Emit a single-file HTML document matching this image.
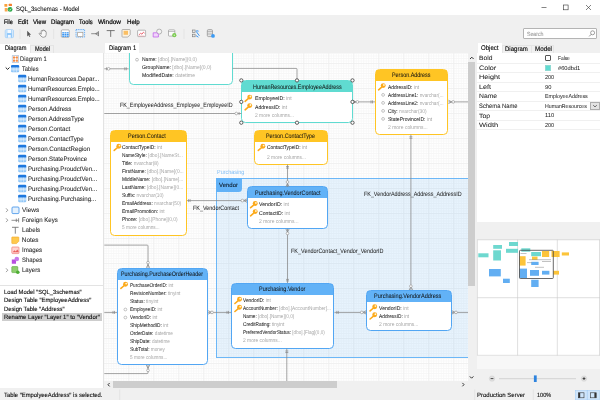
<!DOCTYPE html><html><head><meta charset="utf-8"><title>SQL_3schemas - Model</title><style>html,body{margin:0;padding:0}body{width:600px;height:400px;position:relative;overflow:hidden;background:#f0f0f0;font-family:'Liberation Sans',sans-serif;text-rendering:geometricPrecision;}#w{position:absolute;left:0;top:0;width:600px;height:400px;will-change:transform}
.b{position:absolute;box-sizing:border-box}.t{position:absolute;white-space:pre;transform-origin:0 50%;-webkit-text-stroke:0.12px}svg{position:absolute;left:0;top:0;overflow:visible}</style></head><body><div id="w"><div class="b" style="left:0px;top:0px;width:600px;height:15px;background:#fff;"></div><svg width="600" height="400"><rect x="4.4" y="4" width="2.9" height="2.8" rx="0.5" fill="#f9a03a"/><rect x="8.7" y="3.7" width="3.3" height="2.3" rx="0.5" fill="#f57f2e"/><rect x="4.7" y="8" width="2.9" height="3.5" rx="0.5" fill="#f9a84e"/><circle cx="10.1" cy="9.4" r="2.4" fill="#2eaa4a"/><path d="M9 9.500l0.800 0.800 1.500-1.700" stroke="#fff" stroke-width="0.6" fill="none"/></svg><span class="t" id="t0" style="left:15.70px;top:5.00px;font-size:6.50px;color:#000;line-height:10px;transform:scaleX(0.908);-webkit-text-stroke:0.05px;">SQL_3schemas - Model</span><svg width="600" height="400"><path d="M541.5 7.5h5" stroke="#333" stroke-width="0.6"/><rect x="563.3" y="5" width="4.8" height="4.8" fill="none" stroke="#333" stroke-width="0.6"/><path d="M586 5l5 5M591 5l-5 5" stroke="#333" stroke-width="0.6"/></svg><span class="t" id="t1" style="left:3.60px;top:18.00px;font-size:6.50px;color:#000;line-height:10px;transform:scaleX(0.839);-webkit-text-stroke:0.2px;">File</span><span class="t" id="t2" style="left:18.00px;top:18.00px;font-size:6.50px;color:#000;line-height:10px;transform:scaleX(0.893);-webkit-text-stroke:0.2px;">Edit</span><span class="t" id="t3" style="left:33.00px;top:18.00px;font-size:6.50px;color:#000;line-height:10px;transform:scaleX(0.930);-webkit-text-stroke:0.2px;">View</span><span class="t" id="t4" style="left:51.00px;top:18.00px;font-size:6.50px;color:#000;line-height:10px;transform:scaleX(0.936);-webkit-text-stroke:0.2px;">Diagram</span><span class="t" id="t5" style="left:79.40px;top:18.00px;font-size:6.50px;color:#000;line-height:10px;transform:scaleX(0.895);-webkit-text-stroke:0.2px;">Tools</span><span class="t" id="t6" style="left:98.00px;top:18.00px;font-size:6.50px;color:#000;line-height:10px;transform:scaleX(0.995);-webkit-text-stroke:0.2px;">Window</span><span class="t" id="t7" style="left:127.40px;top:18.00px;font-size:6.50px;color:#000;line-height:10px;transform:scaleX(0.942);-webkit-text-stroke:0.2px;">Help</span><div class="b" style="left:522.6px;top:27.7px;width:74.4px;height:11.4px;background:#fff;border:0.7px solid #b4b4b4;border-radius:1px;"></div><span class="t" id="t8" style="left:526.50px;top:30.00px;font-size:6.00px;color:#a0a0a0;line-height:10px;transform:scaleX(0.868);">Search</span><svg width="600" height="400"><circle cx="592.6" cy="32.8" r="2" fill="none" stroke="#666" stroke-width="0.6"/><path d="M591.2 34.3l-2 2.1" stroke="#666" stroke-width="0.7"/></svg><svg width="600" height="400"><rect x="5.200" y="29.700" width="8.300" height="8" rx="1.200" fill="#8cc6fa" stroke="#9dcbf6" stroke-width="0.6"/><rect x="7.300" y="30" width="4" height="3.100" fill="#f4f9ff"/><rect x="7.800" y="34.900" width="3" height="2.800" fill="#eef6ff"/><rect x="5.500" y="30" width="1.300" height="7.400" fill="#d3e9fd"/><rect x="11.900" y="30" width="1.300" height="7.400" fill="#d3e9fd"/><path d="M20 29v10M53.6 29v10M184 29v10" stroke="#dedede" stroke-width="0.6"/><path d="M27.200 30.800v5.600l1.300-1.200 1 1.900 0.800-0.400-1-1.900h1.800z" fill="#555"/><path d="M41.200 34.300V31.300Q41.200 30.500 41.900 30.500Q42.600 30.500 42.600 31.200V30.600Q42.600 29.900 43.300 29.900Q44 29.900 44 30.600V31Q44 30.400 44.650 30.400Q45.300 30.400 45.300 31.100V31.800Q45.400 31.400 45.850 31.450Q46.200 31.500 46.200 32.200V34.600Q46.200 37.300 43.500 37.300Q42 37.300 41 36.100L39.400 34.100Q38.900 33.400 39.500 33.050Q40.100 32.800 40.600 33.400Z" fill="#f8f8f8" stroke="#6f6f6f" stroke-width="0.65" stroke-linejoin="round"/><rect x="61.300" y="29.900" width="8" height="7.400" rx="1" fill="#fff" stroke="#8a8a8a" stroke-width="0.6"/><rect x="62.2" y="32.2" width="1.900" height="1.300" fill="#3b96f2"/><rect x="62.2" y="34" width="1.900" height="1.300" fill="#3b96f2"/><rect x="62.2" y="35.6" width="1.900" height="1.300" fill="#3b96f2"/><rect x="64.5" y="32.2" width="1.900" height="1.300" fill="#3b96f2"/><rect x="64.5" y="34" width="1.900" height="1.300" fill="#3b96f2"/><rect x="64.5" y="35.6" width="1.900" height="1.300" fill="#3b96f2"/><rect x="66.8" y="32.2" width="1.900" height="1.300" fill="#3b96f2"/><rect x="66.8" y="34" width="1.900" height="1.300" fill="#3b96f2"/><rect x="66.8" y="35.6" width="1.900" height="1.300" fill="#3b96f2"/><rect x="76" y="29.500" width="8.600" height="7.600" fill="#dcecfb" stroke="#4ea0f3" stroke-width="0.8" stroke-dasharray="1.300 0.900"/><rect x="77.700" y="32.400" width="5.200" height="4" fill="#fff" stroke="#a09080" stroke-width="0.6"/><path d="M91.200 33.700h7.300M98.500 31.400v4.700M95.600 33.700l2.900-2M95.600 33.700l2.900 2" stroke="#666" stroke-width="0.7" fill="none"/><path d="M106.700 30.600h8M110.700 30.600v6.300" stroke="#555" stroke-width="0.8" fill="none"/><path d="M122.600 29.500h7q.6 0 .6.600v4.600l-2.400 2.400h-5.200q-.6 0-.6-.600v-6.400q0-.6.600-.6z" fill="#fdf3e2" stroke="#8a8a8a" stroke-width="0.6"/><rect x="123.600" y="30.800" width="4.400" height="4" fill="#fbbf63"/><rect x="137.600" y="30.200" width="8" height="6.400" rx="0.800" fill="#fff" stroke="#8a8a8a" stroke-width="0.6"/><path d="M138.800 35l1.800-1.700 1.400 0.900 1.400-2 1.200 1" stroke="#ea5a67" stroke-width="0.9" fill="none"/><path d="M138.600 36h6" stroke="#f2a0a8" stroke-width="0.6"/><circle cx="159.200" cy="31.600" r="2.500" fill="#f4f4f4" stroke="#8a8a8a" stroke-width="0.6"/><path d="M153.200 32.800h3.600l1.600 1.400v2.800h-5.200z" fill="#f1d5fc" stroke="#c264ea" stroke-width="0.8"/><rect x="168.500" y="29.900" width="6.300" height="6.200" rx="0.600" fill="#fbfbfb" stroke="#8a8a8a" stroke-width="0.6"/><path d="M168.500 31.500h6.300" stroke="#8a8a8a" stroke-width="0.5"/><circle cx="174.300" cy="35.200" r="2.100" fill="#7ccb52"/><circle cx="174.300" cy="35.200" r="0.700" fill="#d9f2c8"/><rect x="192.300" y="30" width="2.800" height="2.600" fill="#e8e8e8" stroke="#777" stroke-width="0.6"/><rect x="192.300" y="34.200" width="2.800" height="2.600" fill="#e8e8e8" stroke="#777" stroke-width="0.6"/><path d="M196 31.200l3.400 4.600M196.400 30.600l2.200 0.600M196 35.600l2.400 1.600" stroke="#3b96f2" stroke-width="1" fill="none"/><rect x="207.300" y="29.600" width="5.200" height="7" rx="1.200" fill="#e4e4e4" stroke="#7d7d7d" stroke-width="0.6"/><path d="M207.300 31.600h5.200M207.300 34h5.200" stroke="#8a8a8a" stroke-width="0.5"/><circle cx="213" cy="35.900" r="1.900" fill="#3b9bf5"/></svg><div class="b" style="left:0px;top:53.4px;width:103px;height:335.1px;background:#fff;"></div><div class="b" style="left:103px;top:53.4px;width:1.3px;height:335.1px;background:#e3e3e3;"></div><div class="b" style="left:0px;top:43.6px;width:30.3px;height:10px;background:#fff;"></div><div class="b" style="left:30.3px;top:45px;width:23.8px;height:8.4px;background:#f0f0f0;border:0.6px solid #e4e4e4;border-bottom:none;"></div><span class="t" id="t9" style="left:4.80px;top:44.00px;font-size:6.70px;color:#000;line-height:10px;transform:scaleX(0.846);">Diagram</span><span class="t" id="t10" style="left:34.50px;top:45.00px;font-size:6.70px;color:#000;line-height:10px;transform:scaleX(0.829);">Model</span><span class="t" id="t11" style="left:27.80px;top:75.00px;font-size:6.40px;color:#262626;line-height:10px;transform:scaleX(0.945);-webkit-text-stroke:0.06px;">HumanResources.Depar...</span><span class="t" id="t12" style="left:27.80px;top:85.00px;font-size:6.40px;color:#262626;line-height:10px;transform:scaleX(0.939);-webkit-text-stroke:0.06px;">HumanResources.Emplo...</span><span class="t" id="t13" style="left:27.80px;top:95.00px;font-size:6.40px;color:#262626;line-height:10px;transform:scaleX(0.939);-webkit-text-stroke:0.06px;">HumanResources.Emplo...</span><span class="t" id="t14" style="left:27.80px;top:105.00px;font-size:6.40px;color:#262626;line-height:10px;transform:scaleX(0.950);-webkit-text-stroke:0.06px;">Person.Address</span><span class="t" id="t15" style="left:27.80px;top:115.00px;font-size:6.40px;color:#262626;line-height:10px;transform:scaleX(0.947);-webkit-text-stroke:0.06px;">Person.AddressType</span><span class="t" id="t16" style="left:27.80px;top:125.00px;font-size:6.40px;color:#262626;line-height:10px;transform:scaleX(0.958);-webkit-text-stroke:0.06px;">Person.Contact</span><span class="t" id="t17" style="left:27.80px;top:135.00px;font-size:6.40px;color:#262626;line-height:10px;transform:scaleX(0.962);-webkit-text-stroke:0.06px;">Person.ContactType</span><span class="t" id="t18" style="left:27.80px;top:145.00px;font-size:6.40px;color:#262626;line-height:10px;transform:scaleX(0.967);-webkit-text-stroke:0.06px;">Person.ContactRegion</span><span class="t" id="t19" style="left:27.80px;top:155.00px;font-size:6.40px;color:#262626;line-height:10px;transform:scaleX(0.958);-webkit-text-stroke:0.06px;">Person.StateProvince</span><span class="t" id="t20" style="left:27.80px;top:165.00px;font-size:6.40px;color:#262626;line-height:10px;transform:scaleX(0.959);-webkit-text-stroke:0.06px;">Purchasing.ProudctVen...</span><span class="t" id="t21" style="left:27.80px;top:175.00px;font-size:6.40px;color:#262626;line-height:10px;transform:scaleX(0.959);-webkit-text-stroke:0.06px;">Purchasing.ProudctVen...</span><span class="t" id="t22" style="left:27.80px;top:185.00px;font-size:6.40px;color:#262626;line-height:10px;transform:scaleX(0.959);-webkit-text-stroke:0.06px;">Purchasing.ProudctVen...</span><span class="t" id="t23" style="left:27.80px;top:195.00px;font-size:6.40px;color:#262626;line-height:10px;transform:scaleX(0.960);-webkit-text-stroke:0.06px;">Purchasing.Purchasing...</span><span class="t" id="t24" style="left:20.40px;top:55.00px;font-size:6.40px;color:#262626;line-height:10px;transform:scaleX(0.902);-webkit-text-stroke:0.06px;">Diagram 1</span><span class="t" id="t25" style="left:21.50px;top:65.00px;font-size:6.40px;color:#262626;line-height:10px;transform:scaleX(0.893);-webkit-text-stroke:0.06px;">Tables</span><svg width="600" height="400"><defs><linearGradient id="tg" x1="0" y1="0" x2="0" y2="1"><stop offset="0" stop-color="#d9ecfd"/><stop offset="1" stop-color="#86c1f6"/></linearGradient></defs><rect x="12.200" y="55.700" width="6.500" height="6.700" fill="#fff" stroke="#9db3cc" stroke-width="0.6"/><rect x="13" y="56.500" width="2" height="2" fill="#f58a42"/><rect x="15.900" y="56.500" width="2" height="2" fill="#f58a42"/><rect x="13" y="59.700" width="2" height="2" fill="#f58a42"/><rect x="15.900" y="59.700" width="2" height="2" fill="#f58a42"/><path d="M14 58.500v1.200M16.900 58.500v1.200M15 57.500h0.900M15 60.700h0.900" stroke="#f58a42" stroke-width="0.5"/><path d="M5.700 67.500l1.900 1.900 1.900-1.900" stroke="#222" stroke-width="1" fill="none"/><rect x="11" y="65.90" width="8.200" height="6.400" rx="1.100" fill="url(#tg)"/><path d="M11 67.50v-1.400q0-1.200 1.200-1.200h5.800q1.200 0 1.200 1.200v1.400z" fill="#1f78de"/><path d="M11.30 69.80h7.600M13.90 67.70v4.400M16.50 67.70v4.400" stroke="#eaf4fe" stroke-width="0.5" fill="none"/><rect x="18.1" y="75.80" width="8.200" height="6.400" rx="1.100" fill="url(#tg)"/><path d="M18.1 77.40v-1.400q0-1.200 1.200-1.200h5.800q1.200 0 1.200 1.200v1.400z" fill="#1f78de"/><path d="M18.40 79.70h7.600M21.00 77.60v4.400M23.60 77.60v4.400" stroke="#eaf4fe" stroke-width="0.5" fill="none"/><rect x="18.1" y="85.80" width="8.200" height="6.400" rx="1.100" fill="url(#tg)"/><path d="M18.1 87.40v-1.400q0-1.200 1.200-1.200h5.800q1.200 0 1.200 1.200v1.400z" fill="#1f78de"/><path d="M18.40 89.70h7.600M21.00 87.60v4.400M23.60 87.60v4.400" stroke="#eaf4fe" stroke-width="0.5" fill="none"/><rect x="18.1" y="95.80" width="8.200" height="6.400" rx="1.100" fill="url(#tg)"/><path d="M18.1 97.40v-1.400q0-1.200 1.200-1.200h5.800q1.200 0 1.200 1.200v1.400z" fill="#1f78de"/><path d="M18.40 99.70h7.600M21.00 97.60v4.400M23.60 97.60v4.400" stroke="#eaf4fe" stroke-width="0.5" fill="none"/><rect x="18.1" y="105.80" width="8.200" height="6.400" rx="1.100" fill="url(#tg)"/><path d="M18.1 107.40v-1.400q0-1.200 1.200-1.200h5.800q1.200 0 1.200 1.200v1.400z" fill="#1f78de"/><path d="M18.40 109.70h7.600M21.00 107.60v4.400M23.60 107.60v4.400" stroke="#eaf4fe" stroke-width="0.5" fill="none"/><rect x="18.1" y="115.80" width="8.200" height="6.400" rx="1.100" fill="url(#tg)"/><path d="M18.1 117.40v-1.400q0-1.200 1.200-1.200h5.800q1.200 0 1.200 1.200v1.400z" fill="#1f78de"/><path d="M18.40 119.70h7.600M21.00 117.60v4.400M23.60 117.60v4.400" stroke="#eaf4fe" stroke-width="0.5" fill="none"/><rect x="18.1" y="125.80" width="8.200" height="6.400" rx="1.100" fill="url(#tg)"/><path d="M18.1 127.40v-1.400q0-1.200 1.200-1.200h5.800q1.200 0 1.200 1.200v1.400z" fill="#1f78de"/><path d="M18.40 129.70h7.600M21.00 127.60v4.400M23.60 127.60v4.400" stroke="#eaf4fe" stroke-width="0.5" fill="none"/><rect x="18.1" y="135.80" width="8.200" height="6.400" rx="1.100" fill="url(#tg)"/><path d="M18.1 137.40v-1.400q0-1.200 1.200-1.200h5.800q1.200 0 1.200 1.200v1.400z" fill="#1f78de"/><path d="M18.40 139.70h7.600M21.00 137.60v4.400M23.60 137.60v4.400" stroke="#eaf4fe" stroke-width="0.5" fill="none"/><rect x="18.1" y="145.80" width="8.200" height="6.400" rx="1.100" fill="url(#tg)"/><path d="M18.1 147.40v-1.400q0-1.200 1.200-1.200h5.800q1.200 0 1.200 1.200v1.400z" fill="#1f78de"/><path d="M18.40 149.70h7.600M21.00 147.60v4.400M23.60 147.60v4.400" stroke="#eaf4fe" stroke-width="0.5" fill="none"/><rect x="18.1" y="155.80" width="8.200" height="6.400" rx="1.100" fill="url(#tg)"/><path d="M18.1 157.40v-1.400q0-1.200 1.200-1.200h5.800q1.200 0 1.200 1.200v1.400z" fill="#1f78de"/><path d="M18.40 159.70h7.600M21.00 157.60v4.400M23.60 157.60v4.400" stroke="#eaf4fe" stroke-width="0.5" fill="none"/><rect x="18.1" y="165.80" width="8.200" height="6.400" rx="1.100" fill="url(#tg)"/><path d="M18.1 167.40v-1.400q0-1.200 1.200-1.200h5.800q1.200 0 1.200 1.200v1.400z" fill="#1f78de"/><path d="M18.40 169.70h7.600M21.00 167.60v4.400M23.60 167.60v4.400" stroke="#eaf4fe" stroke-width="0.5" fill="none"/><rect x="18.1" y="175.80" width="8.200" height="6.400" rx="1.100" fill="url(#tg)"/><path d="M18.1 177.40v-1.400q0-1.200 1.200-1.200h5.800q1.200 0 1.200 1.200v1.400z" fill="#1f78de"/><path d="M18.40 179.70h7.600M21.00 177.60v4.400M23.60 177.60v4.400" stroke="#eaf4fe" stroke-width="0.5" fill="none"/><rect x="18.1" y="185.80" width="8.200" height="6.400" rx="1.100" fill="url(#tg)"/><path d="M18.1 187.40v-1.400q0-1.200 1.200-1.200h5.800q1.200 0 1.200 1.200v1.400z" fill="#1f78de"/><path d="M18.40 189.70h7.600M21.00 187.60v4.400M23.60 187.60v4.400" stroke="#eaf4fe" stroke-width="0.5" fill="none"/><rect x="18.1" y="195.80" width="8.200" height="6.400" rx="1.100" fill="url(#tg)"/><path d="M18.1 197.40v-1.400q0-1.200 1.200-1.200h5.800q1.200 0 1.200 1.200v1.400z" fill="#1f78de"/><path d="M18.40 199.70h7.600M21.00 197.60v4.400M23.60 197.60v4.400" stroke="#eaf4fe" stroke-width="0.5" fill="none"/><path d="M6 208.300l1.800 1.900-1.800 1.900M6 218.300l1.800 1.900-1.800 1.900M6 268.300l1.800 1.900-1.800 1.900" stroke="#777" stroke-width="0.7" fill="none"/><rect x="12" y="207" width="7" height="6.600" rx="1" fill="#e4f1fd" stroke="#3b8fe8" stroke-width="0.8"/><path d="M11.500 220.300h7M16.300 218.600v3.400M18.600 218.200v4.200" stroke="#666" stroke-width="0.7" fill="none"/><path d="M12 227.300h6.600M15.300 227.300v6.400" stroke="#666" stroke-width="0.8" fill="none"/><path d="M12.300 237h6q.5 0 .5.500v3.800l-2.300 2.300h-4.200q-.5 0-.5-.500v-5.600q0-.5.500-.5z" fill="#ffc94d" stroke="#f2a41f" stroke-width="0.6"/><rect x="11.800" y="247" width="7.200" height="6.600" rx="0.8" fill="#ffd4d2" stroke="#ee6b66" stroke-width="0.6"/><path d="M12.600 252.300l1.800-2 1.400 1.200 1.400-2 1.300 1.500v1.300z" fill="#e9605d"/><circle cx="16.800" cy="259" r="2.300" fill="#c77bea"/><path d="M11.800 259.600h3l1.200 1.200v3h-4.200z" fill="#b84fe0"/><rect x="11.800" y="266.600" width="6" height="6" rx="0.6" fill="#8fcf6e" stroke="#5aa63c" stroke-width="0.6"/><circle cx="17.800" cy="272.300" r="1.800" fill="#4fae35"/></svg><span class="t" id="t26" style="left:21.80px;top:206.00px;font-size:6.40px;color:#262626;line-height:10px;transform:scaleX(1.015);-webkit-text-stroke:0.06px;">Views</span><span class="t" id="t27" style="left:21.80px;top:216.00px;font-size:6.40px;color:#262626;line-height:10px;transform:scaleX(0.948);-webkit-text-stroke:0.06px;">Foreign Keys</span><span class="t" id="t28" style="left:21.80px;top:226.00px;font-size:6.40px;color:#262626;line-height:10px;transform:scaleX(0.966);-webkit-text-stroke:0.06px;">Labels</span><span class="t" id="t29" style="left:21.80px;top:236.00px;font-size:6.40px;color:#262626;line-height:10px;transform:scaleX(1.000);-webkit-text-stroke:0.06px;">Notes</span><span class="t" id="t30" style="left:21.80px;top:246.00px;font-size:6.40px;color:#262626;line-height:10px;transform:scaleX(0.963);-webkit-text-stroke:0.06px;">Images</span><span class="t" id="t31" style="left:21.80px;top:256.00px;font-size:6.40px;color:#262626;line-height:10px;transform:scaleX(0.931);-webkit-text-stroke:0.06px;">Shapes</span><span class="t" id="t32" style="left:21.80px;top:266.00px;font-size:6.40px;color:#262626;line-height:10px;transform:scaleX(0.949);-webkit-text-stroke:0.06px;">Layers</span><div class="b" style="left:0px;top:285.2px;width:103px;height:0.7px;background:#e3e3e3;"></div><div class="b" style="left:1.8px;top:312.8px;width:100.4px;height:7.8px;background:#cdcdcd;"></div><span class="t" id="t33" style="left:3.60px;top:288.00px;font-size:6.10px;color:#111;line-height:10px;transform:scaleX(0.956);">Load Model "SQL_3schemas"</span><span class="t" id="t34" style="left:3.60px;top:296.00px;font-size:6.10px;color:#111;line-height:10px;transform:scaleX(0.963);">Design Table "EmployeeAddress"</span><span class="t" id="t35" style="left:3.60px;top:305.00px;font-size:6.10px;color:#111;line-height:10px;transform:scaleX(0.954);">Design Table "Address"</span><span class="t" id="t36" style="left:3.60px;top:313.00px;font-size:6.10px;color:#111;line-height:10px;transform:scaleX(0.973);">Rename Layer "Layer 1" to "Vendor"</span><div class="b" style="left:0px;top:388.5px;width:600px;height:11.5px;background:#f0f0f0;"></div><span class="t" id="t37" style="left:3.60px;top:391.00px;font-size:6.10px;color:#111;line-height:10px;transform:scaleX(0.963);">Table "EmpolyeeAddress" is selected.</span><div class="b" style="left:104.8px;top:42.5px;width:34.4px;height:11px;background:#fff;"></div><span class="t" id="t38" style="left:108.60px;top:44.00px;font-size:6.70px;color:#000;line-height:10px;transform:scaleX(0.881);">Diagram 1</span><div class="b" style="left:104.3px;top:53.4px;width:364.0px;height:327.8px;background-color:#fff;background-image:linear-gradient(#f0f0f0 0.8px,transparent 0.8px),linear-gradient(90deg,#f0f0f0 0.8px,transparent 0.8px),linear-gradient(#f7f7f7 0.7px,transparent 0.7px),linear-gradient(90deg,#f7f7f7 0.7px,transparent 0.7px);background-size:25px 25px,25px 25px,2.5px 2.5px,2.5px 2.5px;background-position:-0.70px 10.10px,-0.70px 10.10px,-0.70px 10.10px,-0.70px 10.10px;overflow:hidden;"><div class="b" style="left:111.50000000000001px;top:124.6px;width:300px;height:179.6px;background:rgba(98,178,247,0.15);border:1.3px solid #6cb7f7;"></div><div class="b" style="left:111.50000000000001px;top:124.6px;width:26.4px;height:13.6px;background:#62b2f7;border-radius:0 0 3.5px 0;"></div><span class="t" id="t39" style="left:112.70px;top:114.60px;font-size:6.00px;color:#80bef6;line-height:10px;transform:scaleX(0.909);-webkit-text-stroke:0px;">Purchasing</span><span class="t" id="t40" style="left:114.70px;top:127.60px;font-size:6.00px;color:#123;line-height:10px;transform:scaleX(0.998);">Vendor</span><div class="b" style="left:24.299999999999997px;top:-23.4px;width:104px;height:54.6px;border:1.3px solid #60dbd1;border-radius:4.5px;background:linear-gradient(#60dbd1 11.7px,#60dbd1 11.7px,#60dbd1 12px,#fff 12px);background-origin:border-box;"></div><span class="t" id="t41" style="left:24.30px;top:-21.40px;font-size:6.40px;color:#111;line-height:10px;-webkit-text-stroke:0.03px;width:104px;text-align:center;"></span><span class="t" id="t42" style="left:37.70px;top:1.60px;font-size:5.50px;color:#a6a6a6;line-height:10px;transform:scaleX(0.909);-webkit-text-stroke:0px;"><span style="color:#1c1c1c;-webkit-text-stroke:0.05px">Name:</span> [dbo].[Name](0,0)</span><span class="t" id="t43" style="left:37.70px;top:9.60px;font-size:5.50px;color:#a6a6a6;line-height:10px;transform:scaleX(0.917);-webkit-text-stroke:0px;"><span style="color:#1c1c1c;-webkit-text-stroke:0.05px">GroupName:</span> [dbo].[Name](0,0)</span><span class="t" id="t44" style="left:37.70px;top:17.60px;font-size:5.50px;color:#a6a6a6;line-height:10px;transform:scaleX(0.937);-webkit-text-stroke:0px;"><span style="color:#1c1c1c;-webkit-text-stroke:0.05px">ModifiedDate:</span> datetime</span><div class="b" style="left:136.89999999999998px;top:26.9px;width:111.4px;height:42.4px;border:1.3px solid #60dbd1;border-radius:4.5px;background:linear-gradient(#60dbd1 12.2px,#60dbd1 12.2px,#60dbd1 12.5px,#fff 12.5px);background-origin:border-box;"></div><span class="t" id="t45" style="left:148.70px;top:29.60px;font-size:6.40px;color:#111;line-height:10px;transform:scaleX(0.847);-webkit-text-stroke:0.03px;">HumanResources.EmployeeAddress</span><span class="t" id="t46" style="left:150.60px;top:40.60px;font-size:5.50px;color:#a6a6a6;line-height:10px;transform:scaleX(0.942);-webkit-text-stroke:0px;"><span style="color:#1c1c1c;-webkit-text-stroke:0.05px">EmployeeID:</span> int</span><span class="t" id="t47" style="left:150.60px;top:49.60px;font-size:5.50px;color:#a6a6a6;line-height:10px;transform:scaleX(0.929);-webkit-text-stroke:0px;"><span style="color:#1c1c1c;-webkit-text-stroke:0.05px">AddressID:</span> int</span><span class="t" id="t48" style="left:150.60px;top:57.60px;font-size:5.50px;color:#a6a6a6;line-height:10px;transform:scaleX(0.894);-webkit-text-stroke:0px;">2 more columns...</span><div class="b" style="left:270.4px;top:15.199999999999996px;width:73.4px;height:66.2px;border:1.3px solid #ffc524;border-radius:4.5px;background:linear-gradient(#ffc524 11.7px,#ffc524 11.7px,#ffc524 12px,#fff 12px);background-origin:border-box;"></div><span class="t" id="t49" style="left:288.20px;top:17.60px;font-size:6.40px;color:#111;line-height:10px;transform:scaleX(0.847);-webkit-text-stroke:0.03px;">Person.Address</span><span class="t" id="t50" style="left:284.10px;top:29.60px;font-size:5.50px;color:#a6a6a6;line-height:10px;transform:scaleX(0.900);-webkit-text-stroke:0px;"><span style="color:#1c1c1c;-webkit-text-stroke:0.05px">AddressID:</span> int</span><span class="t" id="t51" style="left:284.10px;top:37.60px;font-size:5.50px;color:#a6a6a6;line-height:10px;transform:scaleX(0.862);-webkit-text-stroke:0px;"><span style="color:#1c1c1c;-webkit-text-stroke:0.05px">AddressLine1:</span> nvarchar(...</span><span class="t" id="t52" style="left:284.10px;top:45.60px;font-size:5.50px;color:#a6a6a6;line-height:10px;transform:scaleX(0.862);-webkit-text-stroke:0px;"><span style="color:#1c1c1c;-webkit-text-stroke:0.05px">AddressLine2:</span> nvarchar(...</span><span class="t" id="t53" style="left:284.10px;top:53.60px;font-size:5.50px;color:#a6a6a6;line-height:10px;transform:scaleX(0.883);-webkit-text-stroke:0px;"><span style="color:#1c1c1c;-webkit-text-stroke:0.05px">City:</span> nvarchar(30)</span><span class="t" id="t54" style="left:284.10px;top:61.60px;font-size:5.50px;color:#a6a6a6;line-height:10px;transform:scaleX(0.907);-webkit-text-stroke:0px;"><span style="color:#1c1c1c;-webkit-text-stroke:0.05px">StateProvinceID:</span> int</span><span class="t" id="t55" style="left:284.10px;top:69.60px;font-size:5.50px;color:#a6a6a6;line-height:10px;transform:scaleX(0.906);-webkit-text-stroke:0px;">2 more columns...</span><div class="b" style="left:6.0px;top:76.4px;width:76.6px;height:106.5px;border:1.3px solid #ffc524;border-radius:4.5px;background:linear-gradient(#ffc524 11.7px,#ffc524 11.7px,#ffc524 12px,#fff 12px);background-origin:border-box;"></div><span class="t" id="t56" style="left:24.00px;top:78.60px;font-size:6.40px;color:#111;line-height:10px;transform:scaleX(0.856);-webkit-text-stroke:0.03px;">Person.Contact</span><span class="t" id="t57" style="left:18.00px;top:89.60px;font-size:5.50px;color:#a6a6a6;line-height:10px;transform:scaleX(0.888);-webkit-text-stroke:0px;"><span style="color:#1c1c1c;-webkit-text-stroke:0.05px">ContactTypeID:</span> int</span><span class="t" id="t58" style="left:18.00px;top:97.60px;font-size:5.50px;color:#a6a6a6;line-height:10px;transform:scaleX(0.871);-webkit-text-stroke:0px;"><span style="color:#1c1c1c;-webkit-text-stroke:0.05px">NameStyle:</span> [dbo].[NameSt...</span><span class="t" id="t59" style="left:18.00px;top:105.60px;font-size:5.50px;color:#a6a6a6;line-height:10px;transform:scaleX(0.887);-webkit-text-stroke:0px;"><span style="color:#1c1c1c;-webkit-text-stroke:0.05px">Title:</span> nvarchar(8)</span><span class="t" id="t60" style="left:18.00px;top:113.60px;font-size:5.50px;color:#a6a6a6;line-height:10px;transform:scaleX(0.889);-webkit-text-stroke:0px;"><span style="color:#1c1c1c;-webkit-text-stroke:0.05px">FirstName:</span> [dbo].[Name](0...</span><span class="t" id="t61" style="left:18.00px;top:121.60px;font-size:5.50px;color:#a6a6a6;line-height:10px;transform:scaleX(0.874);-webkit-text-stroke:0px;"><span style="color:#1c1c1c;-webkit-text-stroke:0.05px">MiddleName:</span> [dbo].[Name]...</span><span class="t" id="t62" style="left:18.00px;top:129.60px;font-size:5.50px;color:#a6a6a6;line-height:10px;transform:scaleX(0.886);-webkit-text-stroke:0px;"><span style="color:#1c1c1c;-webkit-text-stroke:0.05px">LastName:</span> [dbo].[Name](0...</span><span class="t" id="t63" style="left:18.00px;top:137.60px;font-size:5.50px;color:#a6a6a6;line-height:10px;transform:scaleX(0.870);-webkit-text-stroke:0px;"><span style="color:#1c1c1c;-webkit-text-stroke:0.05px">Suffix:</span> nvarchar(10)</span><span class="t" id="t64" style="left:18.00px;top:145.60px;font-size:5.50px;color:#a6a6a6;line-height:10px;transform:scaleX(0.868);-webkit-text-stroke:0px;"><span style="color:#1c1c1c;-webkit-text-stroke:0.05px">EmailAddress:</span> nvarchar(50)</span><span class="t" id="t65" style="left:18.00px;top:153.60px;font-size:5.50px;color:#a6a6a6;line-height:10px;transform:scaleX(0.895);-webkit-text-stroke:0px;"><span style="color:#1c1c1c;-webkit-text-stroke:0.05px">EmailPromotion:</span> int</span><span class="t" id="t66" style="left:18.00px;top:161.60px;font-size:5.50px;color:#a6a6a6;line-height:10px;transform:scaleX(0.884);-webkit-text-stroke:0px;"><span style="color:#1c1c1c;-webkit-text-stroke:0.05px">Phone:</span> [dbo].[Phone](0,0)</span><span class="t" id="t67" style="left:18.00px;top:169.60px;font-size:5.50px;color:#a6a6a6;line-height:10px;transform:scaleX(0.862);-webkit-text-stroke:0px;">5 more columns...</span><div class="b" style="left:150.10000000000002px;top:76.4px;width:73.2px;height:34.9px;border:1.3px solid #ffc524;border-radius:4.5px;background:linear-gradient(#ffc524 11.7px,#ffc524 11.7px,#ffc524 12px,#fff 12px);background-origin:border-box;"></div><span class="t" id="t68" style="left:162.20px;top:78.60px;font-size:6.40px;color:#111;line-height:10px;transform:scaleX(0.846);-webkit-text-stroke:0.03px;">Person.ContactType</span><span class="t" id="t69" style="left:162.60px;top:89.60px;font-size:5.50px;color:#a6a6a6;line-height:10px;transform:scaleX(0.886);-webkit-text-stroke:0px;"><span style="color:#1c1c1c;-webkit-text-stroke:0.05px">ContactTypeID:</span> int</span><span class="t" id="t70" style="left:162.60px;top:99.60px;font-size:5.50px;color:#a6a6a6;line-height:10px;transform:scaleX(0.894);-webkit-text-stroke:0px;">2 more columns...</span><div class="b" style="left:142.39999999999998px;top:133.1px;width:80.9px;height:42.1px;border:1.3px solid #52a6f3;border-radius:4.5px;background:linear-gradient(#62b2f7 11.7px,#52a6f3 11.7px,#52a6f3 12px,#fff 12px);background-origin:border-box;"></div><span class="t" id="t71" style="left:150.70px;top:135.60px;font-size:6.40px;color:#111;line-height:10px;transform:scaleX(0.861);-webkit-text-stroke:0.03px;">Purchasing.VendorContact</span><span class="t" id="t72" style="left:154.70px;top:146.60px;font-size:5.50px;color:#a6a6a6;line-height:10px;transform:scaleX(0.943);-webkit-text-stroke:0px;"><span style="color:#1c1c1c;-webkit-text-stroke:0.05px">VendorID:</span> int</span><span class="t" id="t73" style="left:154.70px;top:155.60px;font-size:5.50px;color:#a6a6a6;line-height:10px;transform:scaleX(0.930);-webkit-text-stroke:0px;"><span style="color:#1c1c1c;-webkit-text-stroke:0.05px">ContactID:</span> int</span><span class="t" id="t74" style="left:154.70px;top:163.60px;font-size:5.50px;color:#a6a6a6;line-height:10px;transform:scaleX(0.904);-webkit-text-stroke:0px;">2 more columns...</span><div class="b" style="left:12.700000000000003px;top:214.4px;width:91.2px;height:97.2px;border:1.3px solid #52a6f3;border-radius:4.5px;background:linear-gradient(#62b2f7 11.7px,#52a6f3 11.7px,#52a6f3 12px,#fff 12px);background-origin:border-box;"></div><span class="t" id="t75" style="left:17.20px;top:216.60px;font-size:6.40px;color:#111;line-height:10px;transform:scaleX(0.836);-webkit-text-stroke:0.03px;">Purchasing.PurchaseOrderHeader</span><span class="t" id="t76" style="left:25.30px;top:227.60px;font-size:5.50px;color:#a6a6a6;line-height:10px;transform:scaleX(0.840);-webkit-text-stroke:0px;"><span style="color:#1c1c1c;-webkit-text-stroke:0.05px">PurchaseOrderID:</span> int</span><span class="t" id="t77" style="left:25.30px;top:235.60px;font-size:5.50px;color:#a6a6a6;line-height:10px;transform:scaleX(0.868);-webkit-text-stroke:0px;"><span style="color:#1c1c1c;-webkit-text-stroke:0.05px">RevisionNumber:</span> tinyint</span><span class="t" id="t78" style="left:25.30px;top:243.60px;font-size:5.50px;color:#a6a6a6;line-height:10px;transform:scaleX(0.860);-webkit-text-stroke:0px;"><span style="color:#1c1c1c;-webkit-text-stroke:0.05px">Status:</span> tinyint</span><span class="t" id="t79" style="left:25.30px;top:251.60px;font-size:5.50px;color:#a6a6a6;line-height:10px;transform:scaleX(0.834);-webkit-text-stroke:0px;"><span style="color:#1c1c1c;-webkit-text-stroke:0.05px">EmployeeID:</span> int</span><span class="t" id="t80" style="left:25.30px;top:259.60px;font-size:5.50px;color:#a6a6a6;line-height:10px;transform:scaleX(0.861);-webkit-text-stroke:0px;"><span style="color:#1c1c1c;-webkit-text-stroke:0.05px">VendorID:</span> int</span><span class="t" id="t81" style="left:25.30px;top:267.60px;font-size:5.50px;color:#a6a6a6;line-height:10px;transform:scaleX(0.878);-webkit-text-stroke:0px;"><span style="color:#1c1c1c;-webkit-text-stroke:0.05px">ShipMethodID:</span> int</span><span class="t" id="t82" style="left:25.30px;top:275.60px;font-size:5.50px;color:#a6a6a6;line-height:10px;transform:scaleX(0.861);-webkit-text-stroke:0px;"><span style="color:#1c1c1c;-webkit-text-stroke:0.05px">OrderDate:</span> datetime</span><span class="t" id="t83" style="left:25.30px;top:283.60px;font-size:5.50px;color:#a6a6a6;line-height:10px;transform:scaleX(0.853);-webkit-text-stroke:0px;"><span style="color:#1c1c1c;-webkit-text-stroke:0.05px">ShipDate:</span> datetime</span><span class="t" id="t84" style="left:25.30px;top:291.60px;font-size:5.50px;color:#a6a6a6;line-height:10px;transform:scaleX(0.852);-webkit-text-stroke:0px;"><span style="color:#1c1c1c;-webkit-text-stroke:0.05px">SubTotal:</span> money</span><span class="t" id="t85" style="left:25.30px;top:299.60px;font-size:5.50px;color:#a6a6a6;line-height:10px;transform:scaleX(0.855);-webkit-text-stroke:0px;">5 more columns...</span><div class="b" style="left:126.7px;top:229.20000000000002px;width:103.4px;height:66px;border:1.3px solid #52a6f3;border-radius:4.5px;background:linear-gradient(#62b2f7 11.7px,#52a6f3 11.7px,#52a6f3 12px,#fff 12px);background-origin:border-box;"></div><span class="t" id="t86" style="left:154.90px;top:231.60px;font-size:6.40px;color:#111;line-height:10px;transform:scaleX(0.857);-webkit-text-stroke:0.03px;">Purchasing.Vendor</span><span class="t" id="t87" style="left:138.90px;top:242.60px;font-size:5.50px;color:#a6a6a6;line-height:10px;transform:scaleX(0.874);-webkit-text-stroke:0px;"><span style="color:#1c1c1c;-webkit-text-stroke:0.05px">VendorID:</span> int</span><span class="t" id="t88" style="left:138.90px;top:250.60px;font-size:5.50px;color:#a6a6a6;line-height:10px;transform:scaleX(0.850);-webkit-text-stroke:0px;"><span style="color:#1c1c1c;-webkit-text-stroke:0.05px">AccountNumber:</span> [dbo].[AccountNumber]...</span><span class="t" id="t89" style="left:138.90px;top:258.60px;font-size:5.50px;color:#a6a6a6;line-height:10px;transform:scaleX(0.847);-webkit-text-stroke:0px;"><span style="color:#1c1c1c;-webkit-text-stroke:0.05px">Name:</span> [dbo].[Name](0,0)</span><span class="t" id="t90" style="left:138.90px;top:266.60px;font-size:5.50px;color:#a6a6a6;line-height:10px;transform:scaleX(0.860);-webkit-text-stroke:0px;"><span style="color:#1c1c1c;-webkit-text-stroke:0.05px">CreditRating:</span> tinyint</span><span class="t" id="t91" style="left:138.90px;top:274.60px;font-size:5.50px;color:#a6a6a6;line-height:10px;transform:scaleX(0.836);-webkit-text-stroke:0px;"><span style="color:#1c1c1c;-webkit-text-stroke:0.05px">PreferredVendorStatus:</span> [dbo].[Flag](0,0)</span><span class="t" id="t92" style="left:138.90px;top:282.60px;font-size:5.50px;color:#a6a6a6;line-height:10px;transform:scaleX(0.887);-webkit-text-stroke:0px;">2 more columns...</span><div class="b" style="left:261.9px;top:236.20000000000002px;width:85.6px;height:41.8px;border:1.3px solid #52a6f3;border-radius:4.5px;background:linear-gradient(#62b2f7 11.7px,#52a6f3 11.7px,#52a6f3 12px,#fff 12px);background-origin:border-box;"></div><span class="t" id="t93" style="left:269.90px;top:238.60px;font-size:6.40px;color:#111;line-height:10px;transform:scaleX(0.869);-webkit-text-stroke:0.03px;">Purchasing.VendorAddress</span><span class="t" id="t94" style="left:274.30px;top:250.60px;font-size:5.50px;color:#a6a6a6;line-height:10px;transform:scaleX(0.930);-webkit-text-stroke:0px;"><span style="color:#1c1c1c;-webkit-text-stroke:0.05px">VendorID:</span> int</span><span class="t" id="t95" style="left:274.30px;top:258.60px;font-size:5.50px;color:#a6a6a6;line-height:10px;transform:scaleX(0.874);-webkit-text-stroke:0px;"><span style="color:#1c1c1c;-webkit-text-stroke:0.05px">AddressID:</span> int</span><span class="t" id="t96" style="left:274.30px;top:266.60px;font-size:5.50px;color:#a6a6a6;line-height:10px;transform:scaleX(0.901);-webkit-text-stroke:0px;">2 more columns...</span><span class="t" id="t97" style="left:15.50px;top:47.60px;font-size:6.30px;color:#1c1c1c;line-height:10px;transform:scaleX(0.853);-webkit-text-stroke:0.02px;">FK_EmployeeAddress_Employee_EmployeeID</span><span class="t" id="t98" style="left:88.40px;top:150.60px;font-size:6.30px;color:#1c1c1c;line-height:10px;transform:scaleX(0.864);-webkit-text-stroke:0.02px;">FK_VendorContact</span><span class="t" id="t99" style="left:259.90px;top:136.60px;font-size:6.30px;color:#1c1c1c;line-height:10px;transform:scaleX(0.855);-webkit-text-stroke:0.02px;">FK_VendorAddress_Address_AddressID</span><span class="t" id="t100" style="left:187.00px;top:193.60px;font-size:6.30px;color:#1c1c1c;line-height:10px;transform:scaleX(0.869);-webkit-text-stroke:0.02px;">FK_VendorContact_Vendor_VendorID</span><svg width="600" height="400" style="left:-104.3px;top:-53.4px"><circle cx="137.00" cy="59.70" r="1.4" fill="#fff" stroke="#9a9a9a" stroke-width="0.6"/><path d="M245.10 101.30L248.50 98.40" stroke="#fcaa1b" stroke-width="1.6" stroke-linecap="round"/><circle cx="249.70" cy="97.10" r="2.45" fill="#fcaa1b"/><circle cx="250.40" cy="96.50" r="0.9" fill="#fff4d6"/><path d="M245.10 109.80L248.50 106.90" stroke="#fcaa1b" stroke-width="1.6" stroke-linecap="round"/><circle cx="249.70" cy="105.60" r="2.45" fill="#fcaa1b"/><circle cx="250.40" cy="105.00" r="0.9" fill="#fff4d6"/><path d="M378.60 89.80L382.00 86.90" stroke="#fcaa1b" stroke-width="1.6" stroke-linecap="round"/><circle cx="383.20" cy="85.60" r="2.45" fill="#fcaa1b"/><circle cx="383.90" cy="85.00" r="0.9" fill="#fff4d6"/><circle cx="383.10" cy="94.90" r="1.4" fill="#fff" stroke="#9a9a9a" stroke-width="0.6"/><circle cx="383.10" cy="102.90" r="1.4" fill="#fff" stroke="#9a9a9a" stroke-width="0.6"/><circle cx="383.10" cy="110.90" r="1.4" fill="#fff" stroke="#9a9a9a" stroke-width="0.6"/><circle cx="383.10" cy="118.90" r="1.4" fill="#fff" stroke="#9a9a9a" stroke-width="0.6"/><path d="M114.20 150.40L117.60 147.50" stroke="#fcaa1b" stroke-width="1.6" stroke-linecap="round"/><circle cx="118.80" cy="146.20" r="2.45" fill="#fcaa1b"/><circle cx="119.50" cy="145.60" r="0.9" fill="#fff4d6"/><path d="M258.30 150.40L261.70 147.50" stroke="#fcaa1b" stroke-width="1.6" stroke-linecap="round"/><circle cx="262.90" cy="146.20" r="2.45" fill="#fcaa1b"/><circle cx="263.60" cy="145.60" r="0.9" fill="#fff4d6"/><path d="M250.60 207.70L254.00 204.80" stroke="#fcaa1b" stroke-width="1.6" stroke-linecap="round"/><circle cx="255.20" cy="203.50" r="2.45" fill="#fcaa1b"/><circle cx="255.90" cy="202.90" r="0.9" fill="#fff4d6"/><path d="M250.60 215.80L254.00 212.90" stroke="#fcaa1b" stroke-width="1.6" stroke-linecap="round"/><circle cx="255.20" cy="211.60" r="2.45" fill="#fcaa1b"/><circle cx="255.90" cy="211.00" r="0.9" fill="#fff4d6"/><path d="M120.90 288.40L124.30 285.50" stroke="#fcaa1b" stroke-width="1.6" stroke-linecap="round"/><circle cx="125.50" cy="284.20" r="2.45" fill="#fcaa1b"/><circle cx="126.20" cy="283.60" r="0.9" fill="#fff4d6"/><circle cx="125.40" cy="309.50" r="1.4" fill="#fff" stroke="#9a9a9a" stroke-width="0.6"/><circle cx="125.40" cy="317.50" r="1.4" fill="#fff" stroke="#9a9a9a" stroke-width="0.6"/><path d="M234.90 303.50L238.30 300.60" stroke="#fcaa1b" stroke-width="1.6" stroke-linecap="round"/><circle cx="239.50" cy="299.30" r="2.45" fill="#fcaa1b"/><circle cx="240.20" cy="298.70" r="0.9" fill="#fff4d6"/><path d="M234.90 311.50L238.30 308.60" stroke="#fcaa1b" stroke-width="1.6" stroke-linecap="round"/><circle cx="239.50" cy="307.30" r="2.45" fill="#fcaa1b"/><circle cx="240.20" cy="306.70" r="0.9" fill="#fff4d6"/><path d="M370.10 310.90L373.50 308.00" stroke="#fcaa1b" stroke-width="1.6" stroke-linecap="round"/><circle cx="374.70" cy="306.70" r="2.45" fill="#fcaa1b"/><circle cx="375.40" cy="306.10" r="0.9" fill="#fff4d6"/><path d="M370.10 319.00L373.50 316.10" stroke="#fcaa1b" stroke-width="1.6" stroke-linecap="round"/><circle cx="374.70" cy="314.80" r="2.45" fill="#fcaa1b"/><circle cx="375.40" cy="314.20" r="0.9" fill="#fff4d6"/><path d="M104.3 68.8H128.6" fill="none" stroke="#858585" stroke-width="0.75" stroke-linejoin="round"/><circle cx="108.6" cy="68.8" r="1.35" fill="#fff" stroke="#8c8c8c" stroke-width="0.6"/><path d="M106.60 67.3v3" stroke="#858585" stroke-width="0.7"/><path d="M124.80 67.3v3" stroke="#858585" stroke-width="0.7"/><path d="M126.30 67.3v3" stroke="#858585" stroke-width="0.7"/><path d="M232.6 68.4H296.2Q297 68.4 297 69.2V80" fill="none" stroke="#858585" stroke-width="0.75" stroke-linejoin="round"/><path d="M104.3 113.5H241.4" fill="none" stroke="#858585" stroke-width="0.75" stroke-linejoin="round"/><circle cx="236.3" cy="113.5" r="1.35" fill="#fff" stroke="#8c8c8c" stroke-width="0.6"/><path d="M239.10 112.0v3" stroke="#858585" stroke-width="0.7"/><path d="M352.6 101.9H375" fill="none" stroke="#858585" stroke-width="0.75" stroke-linejoin="round"/><path d="M352.6 100.20L355.90 101.9L352.6 103.60" fill="none" stroke="#858585" stroke-width="0.75" stroke-linejoin="round"/><circle cx="357.4" cy="101.9" r="1.35" fill="#fff" stroke="#8c8c8c" stroke-width="0.6"/><path d="M371.00 100.4v3" stroke="#858585" stroke-width="0.7"/><path d="M372.50 100.4v3" stroke="#858585" stroke-width="0.7"/><path d="M448.4 101.9H468.3" fill="none" stroke="#858585" stroke-width="0.75" stroke-linejoin="round"/><path d="M448.4 100.20L451.70 101.9L448.4 103.60" fill="none" stroke="#858585" stroke-width="0.75" stroke-linejoin="round"/><circle cx="453.2" cy="101.9" r="1.35" fill="#fff" stroke="#8c8c8c" stroke-width="0.6"/><path d="M410.9 134.6V290" fill="none" stroke="#858585" stroke-width="0.75" stroke-linejoin="round"/><path d="M409.4 136.80h3" stroke="#858585" stroke-width="0.7"/><path d="M409.4 138.30h3" stroke="#858585" stroke-width="0.7"/><path d="M409.20 290L410.9 286.70L412.60 290" fill="none" stroke="#858585" stroke-width="0.75" stroke-linejoin="round"/><circle cx="410.9" cy="286.2" r="1.35" fill="#fff" stroke="#8c8c8c" stroke-width="0.6"/><path d="M187 200.6H247" fill="none" stroke="#858585" stroke-width="0.75" stroke-linejoin="round"/><path d="M188.60 199.1v3" stroke="#858585" stroke-width="0.7"/><path d="M190.10 199.1v3" stroke="#858585" stroke-width="0.7"/><path d="M247 198.90L243.70 200.6L247 202.30" fill="none" stroke="#858585" stroke-width="0.75" stroke-linejoin="round"/><circle cx="242.4" cy="200.6" r="1.35" fill="#fff" stroke="#8c8c8c" stroke-width="0.6"/><path d="M287.5 164.6V187" fill="none" stroke="#858585" stroke-width="0.75" stroke-linejoin="round"/><path d="M286.0 166.60h3" stroke="#858585" stroke-width="0.7"/><path d="M286.0 168.10h3" stroke="#858585" stroke-width="0.7"/><path d="M285.80 186.8L287.5 183.50L289.20 186.8" fill="none" stroke="#858585" stroke-width="0.75" stroke-linejoin="round"/><circle cx="287.5" cy="182" r="1.35" fill="#fff" stroke="#8c8c8c" stroke-width="0.6"/><path d="M287.5 228.8V283" fill="none" stroke="#858585" stroke-width="0.75" stroke-linejoin="round"/><path d="M285.80 228.8L287.5 232.10L289.20 228.8" fill="none" stroke="#858585" stroke-width="0.75" stroke-linejoin="round"/><circle cx="287.5" cy="233.4" r="1.35" fill="#fff" stroke="#8c8c8c" stroke-width="0.6"/><path d="M286.0 279.40h3" stroke="#858585" stroke-width="0.7"/><path d="M286.0 280.90h3" stroke="#858585" stroke-width="0.7"/><path d="M104.3 312.4H117" fill="none" stroke="#858585" stroke-width="0.75" stroke-linejoin="round"/><path d="M113.00 310.9v3" stroke="#858585" stroke-width="0.7"/><path d="M114.50 310.9v3" stroke="#858585" stroke-width="0.7"/><path d="M208.2 312.4H231.2" fill="none" stroke="#858585" stroke-width="0.75" stroke-linejoin="round"/><path d="M208.2 310.70L211.50 312.4L208.2 314.10" fill="none" stroke="#858585" stroke-width="0.75" stroke-linejoin="round"/><circle cx="212" cy="312.4" r="1.35" fill="#fff" stroke="#8c8c8c" stroke-width="0.6"/><path d="M227.00 310.9v3" stroke="#858585" stroke-width="0.7"/><path d="M228.50 310.9v3" stroke="#858585" stroke-width="0.7"/><path d="M334.4 312.4H366.2" fill="none" stroke="#858585" stroke-width="0.75" stroke-linejoin="round"/><path d="M336.80 310.9v3" stroke="#858585" stroke-width="0.7"/><path d="M338.30 310.9v3" stroke="#858585" stroke-width="0.7"/><path d="M366.2 310.70L362.90 312.4L366.2 314.10" fill="none" stroke="#858585" stroke-width="0.75" stroke-linejoin="round"/><circle cx="361.8" cy="312.4" r="1.35" fill="#fff" stroke="#8c8c8c" stroke-width="0.6"/><path d="M451.8 312.4H468.3" fill="none" stroke="#858585" stroke-width="0.75" stroke-linejoin="round"/><path d="M451.8 310.70L455.10 312.4L451.8 314.10" fill="none" stroke="#858585" stroke-width="0.75" stroke-linejoin="round"/><circle cx="456" cy="312.4" r="1.35" fill="#fff" stroke="#8c8c8c" stroke-width="0.6"/><path d="M286.8 348.6V381" fill="none" stroke="#858585" stroke-width="0.75" stroke-linejoin="round"/><path d="M285.3 351.00h3" stroke="#858585" stroke-width="0.7"/><path d="M285.3 352.50h3" stroke="#858585" stroke-width="0.7"/><path d="M104.3 245.1H147.2Q148 245.1 148 245.9V268" fill="none" stroke="#858585" stroke-width="0.75" stroke-linejoin="round"/><path d="M146.30 267.8L148 264.50L149.70 267.8" fill="none" stroke="#858585" stroke-width="0.75" stroke-linejoin="round"/><circle cx="148" cy="262.6" r="1.35" fill="#fff" stroke="#8c8c8c" stroke-width="0.6"/><path d="M104.3 373.6H147.2Q148 373.6 148 372.800V365" fill="none" stroke="#858585" stroke-width="0.75" stroke-linejoin="round"/><path d="M146.30 365L148 368.30L149.70 365" fill="none" stroke="#858585" stroke-width="0.75" stroke-linejoin="round"/><circle cx="148" cy="370.4" r="1.35" fill="#fff" stroke="#8c8c8c" stroke-width="0.6"/><circle cx="241.3" cy="80.4" r="1.65" fill="#fff" stroke="#3a3a3a" stroke-width="0.8"/><circle cx="297" cy="80.4" r="1.65" fill="#fff" stroke="#3a3a3a" stroke-width="0.8"/><circle cx="352.5" cy="80.4" r="1.65" fill="#fff" stroke="#3a3a3a" stroke-width="0.8"/><circle cx="241.3" cy="101.9" r="1.65" fill="#fff" stroke="#3a3a3a" stroke-width="0.8"/><circle cx="352.5" cy="101.9" r="1.65" fill="#fff" stroke="#3a3a3a" stroke-width="0.8"/><circle cx="241.3" cy="122.7" r="1.65" fill="#fff" stroke="#3a3a3a" stroke-width="0.8"/><circle cx="297" cy="122.7" r="1.65" fill="#fff" stroke="#3a3a3a" stroke-width="0.8"/><circle cx="352.5" cy="122.7" r="1.65" fill="#fff" stroke="#3a3a3a" stroke-width="0.8"/></svg></div><div class="b" style="left:468.3px;top:53.4px;width:6.9px;height:334.8px;background:#f0f0f0;"></div><div class="b" style="left:468.4px;top:62.4px;width:6.8px;height:223.2px;background:#cdcdcd;"></div><div class="b" style="left:104.3px;top:381.2px;width:364px;height:7px;background:#f0f0f0;"></div><div class="b" style="left:113px;top:381.3px;width:223.7px;height:7px;background:#cdcdcd;"></div><svg width="600" height="400"><path d="M470 59l1.800-1.800 1.800 1.800M469.800 376.400l1.800 1.800 1.800-1.800" stroke="#333" stroke-width="1" fill="none"/><path d="M109.600 383l-1.600 1.700 1.600 1.700M462.400 382.900l1.600 1.700-1.600 1.700" stroke="#333" stroke-width="1" fill="none"/></svg><div class="b" style="left:476.8px;top:53.4px;width:123.2px;height:168.3px;background:#fff;"></div><div class="b" style="left:475.2px;top:53.4px;width:1.6px;height:334.8px;background:#f0f0f0;"></div><div class="b" style="left:477.6px;top:43.4px;width:24.2px;height:10.2px;background:#fff;"></div><div class="b" style="left:501.8px;top:44.6px;width:30px;height:8.8px;background:#f0f0f0;border:0.6px solid #e4e4e4;border-bottom:none;"></div><div class="b" style="left:531.8px;top:44.6px;width:22.6px;height:8.8px;background:#f0f0f0;border:0.6px solid #e4e4e4;border-bottom:none;border-left:none;"></div><span class="t" id="t101" style="left:480.80px;top:44.00px;font-size:6.70px;color:#000;line-height:10px;transform:scaleX(0.905);">Object</span><span class="t" id="t102" style="left:505.20px;top:45.00px;font-size:6.70px;color:#000;line-height:10px;transform:scaleX(0.902);">Diagram</span><span class="t" id="t103" style="left:534.60px;top:45.00px;font-size:6.70px;color:#000;line-height:10px;transform:scaleX(0.933);">Model</span><span class="t" id="t104" style="left:479.40px;top:54.00px;font-size:6.30px;color:#1c1c1c;line-height:10px;transform:scaleX(1.063);-webkit-text-stroke:0.04px;">Bold</span><span class="t" id="t105" style="left:558.20px;top:54.00px;font-size:5.70px;color:#1c1c1c;line-height:10px;transform:scaleX(0.848);-webkit-text-stroke:0.02px;">False</span><div class="b" style="left:476.8px;top:62.6px;width:123.2px;height:0.6px;background:#f0f0f0;"></div><span class="t" id="t106" style="left:479.40px;top:64.00px;font-size:6.30px;color:#1c1c1c;line-height:10px;transform:scaleX(1.142);-webkit-text-stroke:0.04px;">Color</span><span class="t" id="t107" style="left:558.20px;top:64.00px;font-size:5.70px;color:#1c1c1c;line-height:10px;transform:scaleX(1.006);-webkit-text-stroke:0.02px;">#60dbd1</span><div class="b" style="left:476.8px;top:72.13px;width:123.2px;height:0.6px;background:#f0f0f0;"></div><span class="t" id="t108" style="left:479.40px;top:73.00px;font-size:6.30px;color:#1c1c1c;line-height:10px;transform:scaleX(1.159);-webkit-text-stroke:0.04px;">Height</span><span class="t" id="t109" style="left:544.80px;top:73.00px;font-size:5.70px;color:#1c1c1c;line-height:10px;transform:scaleX(0.968);-webkit-text-stroke:0.02px;">200</span><div class="b" style="left:476.8px;top:81.66px;width:123.2px;height:0.6px;background:#f0f0f0;"></div><span class="t" id="t110" style="left:479.40px;top:83.00px;font-size:6.30px;color:#1c1c1c;line-height:10px;transform:scaleX(1.151);-webkit-text-stroke:0.04px;">Left</span><span class="t" id="t111" style="left:544.80px;top:83.00px;font-size:5.70px;color:#1c1c1c;line-height:10px;transform:scaleX(1.011);-webkit-text-stroke:0.02px;">90</span><div class="b" style="left:476.8px;top:91.19px;width:123.2px;height:0.6px;background:#f0f0f0;"></div><span class="t" id="t112" style="left:479.40px;top:92.00px;font-size:6.30px;color:#1c1c1c;line-height:10px;transform:scaleX(1.078);-webkit-text-stroke:0.04px;">Name</span><span class="t" id="t113" style="left:544.80px;top:92.00px;font-size:5.70px;color:#1c1c1c;line-height:10px;transform:scaleX(0.925);-webkit-text-stroke:0.02px;">EmployeeAddress</span><div class="b" style="left:476.8px;top:100.72px;width:123.2px;height:0.6px;background:#f0f0f0;"></div><span class="t" id="t114" style="left:479.40px;top:102.00px;font-size:6.30px;color:#1c1c1c;line-height:10px;transform:scaleX(0.927);-webkit-text-stroke:0.04px;">Schema Name</span><span class="t" id="t115" style="left:544.80px;top:102.00px;font-size:5.70px;color:#1c1c1c;line-height:10px;transform:scaleX(0.918);-webkit-text-stroke:0.02px;">HumanResources</span><div class="b" style="left:476.8px;top:110.25px;width:123.2px;height:0.6px;background:#f0f0f0;"></div><span class="t" id="t116" style="left:479.40px;top:112.00px;font-size:6.30px;color:#1c1c1c;line-height:10px;transform:scaleX(1.103);-webkit-text-stroke:0.04px;">Top</span><span class="t" id="t117" style="left:544.80px;top:111.00px;font-size:5.70px;color:#1c1c1c;line-height:10px;transform:scaleX(1.013);-webkit-text-stroke:0.02px;">110</span><div class="b" style="left:476.8px;top:119.78px;width:123.2px;height:0.6px;background:#f0f0f0;"></div><span class="t" id="t118" style="left:479.40px;top:121.00px;font-size:6.30px;color:#1c1c1c;line-height:10px;transform:scaleX(1.192);-webkit-text-stroke:0.04px;">Width</span><span class="t" id="t119" style="left:544.80px;top:121.00px;font-size:5.70px;color:#1c1c1c;line-height:10px;transform:scaleX(0.968);-webkit-text-stroke:0.02px;">200</span><div class="b" style="left:476.8px;top:129.31px;width:123.2px;height:0.6px;background:#f0f0f0;"></div><div class="b" style="left:544.8px;top:55.1px;width:6.2px;height:6.2px;background:#fff;border:0.6px solid #555;border-radius:1px;"></div><div class="b" style="left:544.8px;top:64.8px;width:6.2px;height:6.2px;background:#60dbd1;border:0.4px solid #8fd9d2;"></div><div class="b" style="left:590.4px;top:101.6px;width:9.2px;height:8.8px;background:#e3e3e3;border:0.6px solid #adadad;"></div><svg width="600" height="400"><path d="M593.200 105.200l1.800 1.700 1.800-1.700" stroke="#333" stroke-width="0.7" fill="none"/></svg><div class="b" style="left:477.2px;top:355.5px;width:122.8px;height:13.6px;background:#f7f7f7;"></div><div class="b" style="left:477.2px;top:239.6px;width:122.6px;height:116px;background:#fff;"></div><svg width="600" height="400"><path d="M477.400 239.600V355.500M517.600 239.600V355.500M557.300 239.600V355.500M599.500 239.600V355.500M477.400 239.800H600M477.400 297.700H600M477.400 355.300H600" stroke="#c9c9c9" stroke-width="0.6" fill="none"/><rect x="493.2" y="245" width="8.8" height="3.8" fill="#6ed8cf"/><rect x="509" y="242" width="9.0" height="4.0" fill="#6ed8cf"/><rect x="506" y="248.8" width="12.0" height="4.0" fill="#6ed8cf"/><rect x="521.3" y="248.3" width="9.0" height="3.4" fill="#6ed8cf"/><rect x="478.3" y="253.3" width="10.2" height="4.0" fill="#6ed8cf"/><rect x="493.2" y="250.3" width="7.8" height="10.2" fill="#6ed8cf"/><rect x="531.2" y="252" width="9.8" height="4.2" fill="#6ed8cf"/><rect x="542" y="251" width="7.2" height="6.0" fill="#fcc43a"/><rect x="551.5" y="251" width="8.1" height="6.0" fill="#fcc43a"/><rect x="561.8" y="252.4" width="7.2" height="3.1" fill="#fcc43a"/><rect x="519.5" y="256.2" width="6.1" height="9.4" fill="#fcc43a"/><rect x="532" y="256.6" width="5.5" height="3.4" fill="#fcc43a"/><rect x="553.3" y="270.8" width="5.7" height="3.8" fill="#fcc43a"/><rect x="489" y="269" width="11.8" height="7.4" fill="#62aef2"/><rect x="503" y="278.7" width="6.8" height="4.3" fill="#62aef2"/><rect x="519.5" y="268.6" width="7.5" height="9.4" fill="#62aef2"/><rect x="530" y="270" width="9.0" height="5.8" fill="#62aef2"/><rect x="542" y="270.8" width="7.4" height="3.8" fill="#62aef2"/><rect x="531.2" y="261.8" width="7.4" height="3.2" fill="#62aef2"/><rect x="531.2" y="279.8" width="7.4" height="7.2" fill="#62aef2"/><path d="M520.500 253.500h6M529 259.700h22M527 262.600h5M542 261.500h9M535 267.300h9" stroke="#999" stroke-width="0.6"/><rect x="519.500" y="250.300" width="33.800" height="28.200" fill="none" stroke="#444" stroke-width="0.8" rx="0.8"/><path d="M499 378.600h77" stroke="#d8d8d8" stroke-width="1.2"/><rect x="533.900" y="375.400" width="2.800" height="6.600" fill="#2d83de"/><circle cx="492" cy="378.600" r="2.700" fill="#e1e1e1" stroke="#c6c6c6" stroke-width="0.4"/><path d="M490.600 378.600h2.800" stroke="#222" stroke-width="0.8"/><circle cx="584" cy="378.600" r="2.700" fill="#e1e1e1" stroke="#c6c6c6" stroke-width="0.4"/><path d="M582.600 378.600h2.800M584 377.200v2.800" stroke="#222" stroke-width="0.8"/><path d="M119.700 389.500v10.500M474.700 389.500v10.500M533.300 389.500v10.500" stroke="#dcdcdc" stroke-width="0.6"/><rect x="575.300" y="390.400" width="11.800" height="9.600" fill="#cfe5fb" stroke="#9fcbf5" stroke-width="0.5"/><rect x="587.600" y="390.400" width="11.800" height="9.600" fill="#cfe5fb" stroke="#9fcbf5" stroke-width="0.5"/><rect x="578.400" y="392.800" width="5.600" height="5" fill="none" stroke="#333" stroke-width="0.6"/><rect x="578.400" y="392.800" width="1.800" height="5" fill="#333"/><rect x="590.600" y="392.800" width="5.600" height="5" fill="none" stroke="#333" stroke-width="0.6"/><rect x="594.400" y="392.800" width="1.800" height="5" fill="#333"/></svg><span class="t" id="t120" style="left:476.80px;top:391.00px;font-size:6.10px;color:#111;line-height:10px;transform:scaleX(0.984);">Production Server</span><span class="t" id="t121" style="left:536.50px;top:391.00px;font-size:6.10px;color:#111;line-height:10px;transform:scaleX(0.911);">100%</span></div></body></html>
